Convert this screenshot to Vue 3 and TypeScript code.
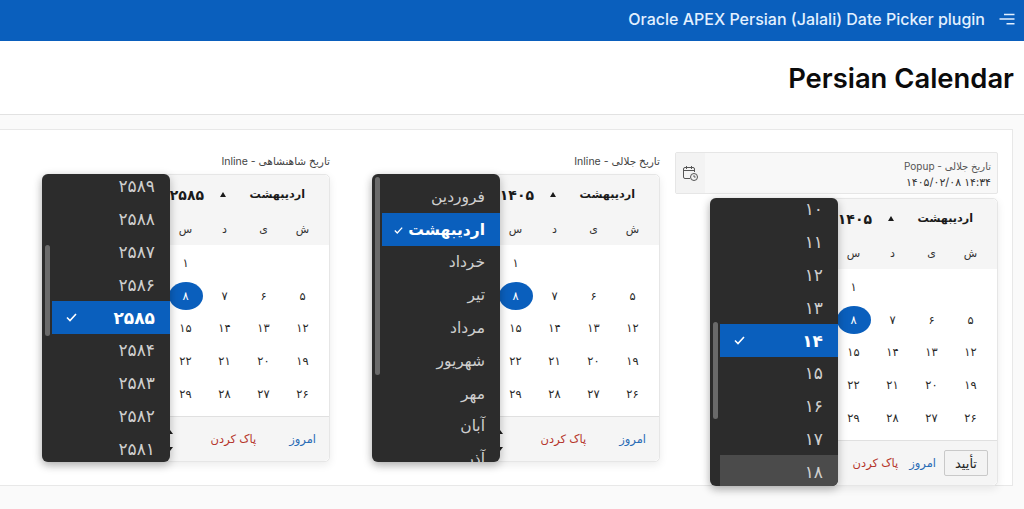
<script setup lang="ts">
const toFa = (n: number | string): string =>
  String(n).replace(/\d/g, (d) => '۰۱۲۳۴۵۶۷۸۹'[Number(d)]);

// The three leftmost week columns sit under the open dropdown, so only the
// four visible columns carry text.
const weekdays = ['ش', 'ی', 'د', 'س', '', '', ''];
const blanks = [1, 2, 3];
const days = Array.from({ length: 31 }, (_, i) => i + 1);
const isVisibleDay = (d: number): boolean => (d + 2) % 7 < 4;

interface Pick {
  key: string;
  label: string;
  popup: boolean;
  year: string;
  items: string[];
  selected: number;
  hover: number;
  isMonth: boolean;
  listTop: number;
  thumbTop: number;
  thumbHeight: number;
}

const months = ['فروردین', 'اردیبهشت', 'خرداد', 'تیر', 'مرداد', 'شهریور', 'مهر', 'آبان', 'آذر'];
const years = [2589, 2588, 2587, 2586, 2585, 2584, 2583, 2582, 2581].map(toFa);
const hours = [10, 11, 12, 13, 14, 15, 16, 17, 18].map(toFa);

const pickers: Pick[] = [
  { key: 'shah', label: 'تاریخ شاهنشاهی - Inline', popup: false, year: '۲۵۸۵', items: years, selected: 4, hover: -1, isMonth: false, listTop: -4, thumbTop: 71, thumbHeight: 91 },
  { key: 'jalali', label: 'تاریخ جلالی - Inline', popup: false, year: '۱۴۰۵', items: months, selected: 1, hover: -1, isMonth: true, listTop: 6, thumbTop: 3, thumbHeight: 198 },
  { key: 'popup', label: '', popup: true, year: '۱۴۰۵', items: hours, selected: 4, hover: 8, isMonth: false, listTop: -5, thumbTop: 124, thumbHeight: 97 },
];
</script>

<template>
  <div class="page">
    <header class="topbar">
      <span class="app-title">Oracle APEX Persian (Jalali) Date Picker plugin</span>
      <svg class="burger" width="16" height="12" viewBox="0 0 16 12" fill="none" stroke="currentColor" stroke-width="1.4">
        <path d="M5 1.5h10.5M.5 6h15M7.5 10.7h8" />
      </svg>
    </header>

    <section class="hero"><h1>Persian Calendar</h1></section>

    <main class="body-area">
      <div class="region">
        <div v-for="p in pickers" :key="p.key" class="col">
          <div v-if="p.popup" class="field">
            <div class="field-icon">
              <svg width="17" height="17" viewBox="0 0 17 17" fill="none" stroke="#555" stroke-width="1">
                <path d="M8 13.5H3a1.5 1.5 0 0 1-1.5-1.5V4A1.5 1.5 0 0 1 3 2.5h8A1.5 1.5 0 0 1 12.500 4v3" />
                <path d="M1.500 5.500h11M4.500 1v3M9.500 1v3" />
                <circle cx="12" cy="12" r="3.500" />
                <path d="M12 10.200V12h1.600" />
              </svg>
            </div>
            <div class="field-main" dir="rtl">
              <div class="field-label">تاریخ جلالی - Popup</div>
              <div class="field-value">۱۴:۳۴ ۱۴۰۵/۰۲/۰۸</div>
            </div>
          </div>
          <div v-else class="inline-label" dir="rtl">{{ p.label }}</div>

          <div class="cal" dir="rtl">
            <div class="cal-head">
              <div class="cal-nav">
                <span class="cal-month">اردیبهشت</span>
                <span class="tri"></span>
                <span class="cal-year">{{ p.year }}</span>
              </div>
              <div class="cal-week">
                <span v-for="(w, i) in weekdays" :key="i">{{ w }}</span>
              </div>
            </div>

            <div class="cal-days">
              <span v-for="b in blanks" :key="'b' + b"></span>
              <span v-for="d in days" :key="d" class="day" :class="{ on: d === 8 }">
                <i v-if="isVisibleDay(d)">{{ toFa(d) }}</i>
              </span>
            </div>

            <div class="cal-foot" :class="{ 'foot-popup': p.popup }">
              <button v-if="p.popup" class="ok" type="button">تأیید</button>
              <a class="today">امروز</a>
              <a class="clear">پاک کردن</a>
              <template v-if="!p.popup">
                <span class="spin up"></span>
                <span class="spin down"></span>
              </template>
            </div>

            <div class="menu" dir="ltr">
              <div class="menu-list" :style="{ marginTop: p.listTop + 'px' }">
                <div
                  v-for="(item, i) in p.items"
                  :key="item"
                  class="menu-item"
                  :class="{ sel: i === p.selected, hov: i === p.hover, month: p.isMonth }"
                  dir="rtl"
                >
                  <span>{{ item }}</span>
                  <svg v-if="i === p.selected" class="check" :class="{ near: p.isMonth }" width="11" height="9" viewBox="0 0 11 9" fill="none" stroke="#fff" stroke-width="1.600">
                    <path d="M1 4.500l3 3 6-6.500" />
                  </svg>
                </div>
              </div>
              <div class="thumb" :style="{ top: p.thumbTop + 'px', height: p.thumbHeight + 'px' }"></div>
            </div>
          </div>
        </div>
      </div>
    </main>
  </div>
</template>

<style>
html, body { margin: 0; background: #fafafa; overflow: hidden; }
</style>

<style scoped>
.page {
  width: 1024px;
  height: 509px;
  overflow: hidden;
  background: #fafafa;
  font-family: Inter, "DejaVu Sans", sans-serif;
  color: #1f1f1f;
}
.topbar {
  height: 41px;
  box-sizing: border-box;
  background: #0a5fbd;
  color: #e2f0ff;
  display: flex;
  align-items: center;
  justify-content: flex-end;
  padding: 0 9px 3px 0;
  gap: 14px;
}
.app-title { font-size: 16px; font-weight: 500; }
.burger { display: block; }
.hero {
  height: 74px;
  box-sizing: border-box;
  background: #fff;
  border-bottom: 1px solid #e2e2e2;
  display: flex;
  align-items: center;
  justify-content: flex-end;
  padding: 0 10px 0 0;
}
h1 { margin: 0; font-size: 27.400px; font-weight: 600; color: #0b0b0b; }
.body-area { padding: 14px 11px 0 0; }
.region {
  margin-left: -1px;
  height: 357px;
  box-sizing: border-box;
  background: #fff;
  border: 1px solid #e8e8e8;
  display: grid;
  grid-template-columns: 330px 330px 338px;
  padding: 22px 0 0 0;
}
.col { display: flex; flex-direction: column; align-items: flex-end; min-width: 0; }
.inline-label {
  height: 22px;
  font-size: 10.500px;
  line-height: 20px;
  color: #444;
  width: 288px;
}
.field {
  width: 323px;
  height: 42px;
  box-sizing: border-box;
  display: flex;
  border: 1px solid #e6e6e6;
  border-radius: 2px;
  background: #f8f8f8;
  margin-bottom: 4px;
}
.field-icon {
  width: 29px;
  flex: none;
  background: #f3f3f3;
  display: flex;
  align-items: center;
  justify-content: center;
}
.field-main {
  flex: 1;
  padding: 5px 6px 0 0;
  line-height: 16px;
  color: #555;
}
.field-label { font-size: 10px; }
.field-value { color: #333; font-size: 11px; }
.cal {
  position: relative;
  width: 288px;
  height: 288px;
  box-sizing: border-box;
  border: 1px solid #e6e6e6;
  border-radius: 5px;
  background: #fff;
  box-shadow: 0 3px 9px rgba(0, 0, 0, 0.08);
}
.cal-head { background: #f5f5f5; height: 70px; border-radius: 5px 5px 0 0; }
.cal-nav {
  height: 38px;
  display: flex;
  align-items: center;
  padding-right: 24px;
}
.cal-month { width: 79px; font-size: 11.200px; font-weight: 700; color: #1a1a1a; }
.tri {
  width: 0;
  height: 0;
  border-left: 3px solid transparent;
  border-right: 3px solid transparent;
  border-bottom: 5px solid #1a1a1a;
}
.cal-year { margin-right: 16px; font-size: 14px; font-weight: 700; color: #1a1a1a; }
.cal-week, .cal-days {
  display: grid;
  grid-template-columns: repeat(7, 39px);
  padding: 0 7px 0 6px;
}
.cal-week { height: 32px; align-items: center; text-align: center; font-size: 11px; color: #333; }
.cal-days {
  height: 171px;
  box-sizing: border-box;
  padding-top: 2px;
  grid-auto-rows: 32.600px;
  align-content: start;
  font-size: 11.500px;
  color: #2a2a2a;
}
.day { display: flex; align-items: center; justify-content: center; font-weight: 500; }
.day i { font-style: normal; }
.day.on i {
  width: 34px;
  height: 28px;
  border-radius: 50%;
  background: #0a5fbd;
  color: #fff;
  display: flex;
  align-items: center;
  justify-content: center;
}
.cal-foot {
  position: relative;
  height: 45px;
  box-sizing: border-box;
  background: #f5f5f5;
  border-top: 1px solid #e0e0e0;
  border-radius: 0 0 5px 5px;
  display: flex;
  align-items: center;
  padding: 0 13px 0 0;
  gap: 33px;
  font-size: 11.500px;
}
.foot-popup { padding-right: 9px; gap: 8px; }
.foot-popup .clear { margin-right: 3px; }
.today { color: #2a6cb5; }
.clear { color: #b5362c; }
.ok {
  width: 44px;
  height: 26px;
  padding: 0;
  box-sizing: border-box;
  border: 1px solid #c9c9c9;
  border-radius: 2px;
  background: #f3f3f3;
  font: inherit;
  font-size: 13px;
  color: #262626;
}
.spin {
  position: absolute;
  left: 124px;
  width: 0;
  height: 0;
  border-left: 3px solid transparent;
  border-right: 3px solid transparent;
}
.spin.up { top: 13px; border-bottom: 4px solid #1a1a1a; }
.spin.down { top: 30px; border-top: 4px solid #1a1a1a; }
.menu {
  position: absolute;
  left: -1px;
  top: -1px;
  width: 128px;
  height: 288px;
  overflow: hidden;
  background: #2c2c2c;
  border-radius: 6px;
  box-shadow: 0 3px 10px rgba(0, 0, 0, 0.28);
}
.menu-list { margin-left: 10px; }
.menu-item {
  position: relative;
  height: 32.800px;
  display: flex;
  align-items: center;
  padding-right: 15px;
  font-size: 17px;
  color: #cfcfcf;
  font-weight: 500;
}
.menu-item.month { font-size: 15.500px; }
.menu-item.sel { background: #0a5fbd; color: #fff; font-weight: 700; }
.check { position: absolute; left: 14px; top: 12px; }
.check.near { position: static; width: 9px; margin-right: 5px; margin-top: 3px; }
.menu-item.hov { background: #4b4b4b; }
.thumb {
  position: absolute;
  left: 3px;
  width: 5px;
  background: #6a6a6a;
  border-radius: 3px;
}
</style>
